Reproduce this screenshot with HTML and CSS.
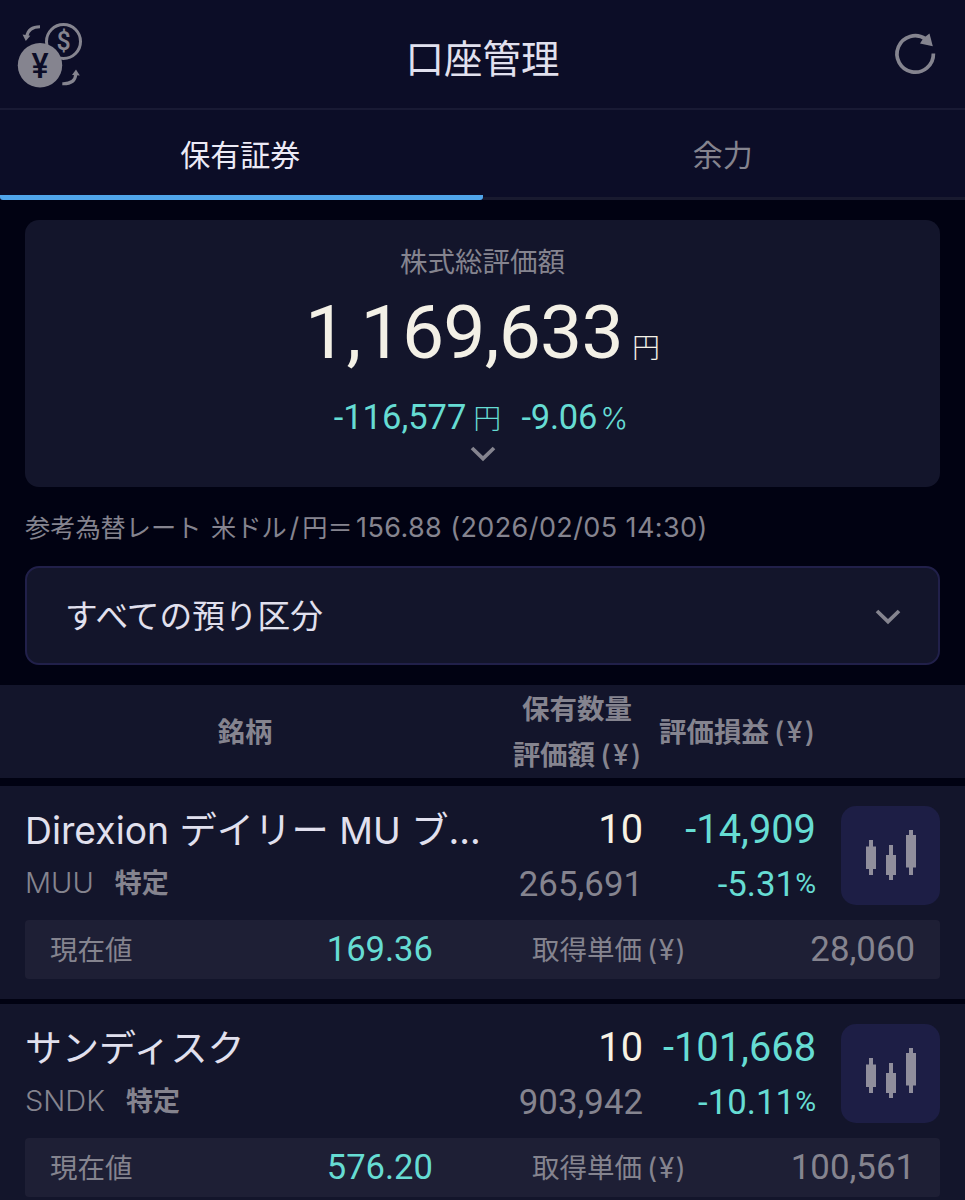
FILE: index.html
```html
<!DOCTYPE html>
<html lang="ja">
<head>
<meta charset="utf-8">
<title>口座管理</title>
<link rel="stylesheet" href="styles.css">
</head>
<body>
<header class="topbar">
  <svg class="icon-currency" viewBox="0 0 70 70" width="70" height="70">
    <circle class="ring" cx="48.5" cy="26.5" r="17"/>
    <circle class="coin" cx="25" cy="50.3" r="22.2"/>
    <text class="yen" transform="translate(25 62.8) scale(.92 1)">¥</text>
    <text class="dollar" x="48.5" y="35.3">$</text>
    <path class="stroke" d="M25 11.7C16.5 11.7 12.8 15 11.700 21.5"/>
    <path class="fill" d="M7.600 19.500L15.300 20.800L10.800 26z"/>
    <path class="stroke" d="M47.300 68.700C56 69 60.200 66 60.800 59.500"/>
    <path class="fill" d="M57 60L61 54.600L64.800 60.500z"/>
  </svg>
  <h1 class="title">口座管理</h1>
  <svg class="icon-refresh" viewBox="0 0 44 44" width="44" height="44">
    <path class="arc" d="M40.400 21.500A18.200 18.200 0 1 1 32.600 7"/>
    <path class="fill" d="M36.500 1.500L39.800 14.300L27 11.500L30.500 6z"/>
  </svg>
</header>
<nav class="tabs">
  <div class="tab tab-active">保有証券</div>
  <div class="tab">余力</div>
</nav>
<main>
  <section class="summary">
    <div class="summary-label">株式総評価額</div>
    <div class="summary-total"><span class="num total">1,169,633</span><span class="yen-unit">円</span></div>
    <div class="summary-change"><span class="num">-116,577</span><span class="unit">円</span><span class="num rate">-9.06</span><span class="pct-unit">%</span></div>
    <svg class="chevron" viewBox="0 0 26 16" width="26" height="16"><path d="M2 2L13 12.600L24 2"/></svg>
  </section>
  <p class="fx"><span class="fx-label">参考為替レート</span><span class="fx-pair">米ドル<i>/</i>円＝</span><span class="fx-rate">156.88 (2026/02/05 14:30)</span></p>
  <div class="select">
    <span class="select-text">すべての預り区分</span>
    <svg class="chevron" viewBox="0 0 26 16" width="26" height="16"><path d="M2 2L13 12.600L24 2"/></svg>
  </div>
  <div class="thead">
    <div class="th th-name">銘柄</div>
    <div class="th th-qty">保有数量<br>評価額<span class="cur">(¥)</span></div>
    <div class="th th-pl">評価損益<span class="cur">(¥)</span></div>
  </div>
  <article class="holding">
    <div class="grid">
      <div class="name name-mixed">Direxion デイリー MU ブ...</div>
      <div class="num qty">10</div>
      <div class="num pl">-14,909</div>
      <div class="chart-btn">
        <svg viewBox="0 0 50 50" width="50" height="50"><path d="M3 10h4v6.500h3v22.500H7v6H3v-6H0V16.500h3zM23 15h4v10h3v20h-3v5h-4v-5h-3V25h3zM43 0h4v5h3v32.500h-3v7.500h-4v-7.500h-3V5h3z"/></svg>
      </div>
      <div class="sub"><span class="ticker">MUU</span><span class="acct">特定</span></div>
      <div class="num value">265,691</div>
      <div class="num plpct">-5.31<span class="pct">%</span></div>
    </div>
    <div class="detail">
      <span class="d-label">現在値</span><span class="num d-price">169.36</span>
      <span class="d-label d-cost-label">取得単価<span class="cur">(¥)</span></span><span class="num d-cost">28,060</span>
    </div>
  </article>
  <article class="holding">
    <div class="grid">
      <div class="name">サンディスク</div>
      <div class="num qty">10</div>
      <div class="num pl">-101,668</div>
      <div class="chart-btn">
        <svg viewBox="0 0 50 50" width="50" height="50"><path d="M3 10h4v6.500h3v22.500H7v6H3v-6H0V16.500h3zM23 15h4v10h3v20h-3v5h-4v-5h-3V25h3zM43 0h4v5h3v32.500h-3v7.500h-4v-7.500h-3V5h3z"/></svg>
      </div>
      <div class="sub"><span class="ticker">SNDK</span><span class="acct">特定</span></div>
      <div class="num value">903,942</div>
      <div class="num plpct">-10.11<span class="pct">%</span></div>
    </div>
    <div class="detail">
      <span class="d-label">現在値</span><span class="num d-price">576.20</span>
      <span class="d-label d-cost-label">取得単価<span class="cur">(¥)</span></span><span class="num d-cost">100,561</span>
    </div>
  </article>
</main>
</body>
</html>
```
FILE: styles.css
```css
* { box-sizing: border-box; }
html, body { height: 1200px; overflow: hidden; }
body {
  margin: 0;
  background: #010212;
  color: #e1e0ee;
  font-family: Inter, "Noto Sans CJK JP", sans-serif;
  font-weight: 400;
}
.num { font-family: Roboto, "Noto Sans CJK JP", sans-serif; white-space: nowrap; }

.topbar {
  height: 110px;
  padding: 0 28px 0 15px;
  display: grid;
  grid-template-columns: 1fr auto 1fr;
  background: #0c0d27;
  border-bottom: 2px solid #191a34;
}
.icon-currency { margin-top: 15px; overflow: visible; }
.icon-refresh { margin-top: 32px; justify-self: end; }
.title { margin: 0 0 0 13px; font-size: 38.5px; font-weight: 400; line-height: 119px; }
.ring, .stroke, .arc { fill: none; stroke: #85848f; stroke-width: 3; }
.arc { stroke-width: 3.7; }
.coin, .fill { fill: #85848f; }
.yen { font: 500 35px Roboto, sans-serif; fill: #0c0d27; text-anchor: middle; }
.dollar { font: 500 25px Roboto, sans-serif; fill: #85848f; text-anchor: middle; }

.tabs { display: flex; height: 90px; background: #0c0d27; }
.tab {
  flex: 1;
  padding-right: 2px;
  text-align: center;
  font-size: 30px;
  line-height: 91px;
  color: #85848f;
  border-bottom: 3px solid #191a2f;
}
.tab-active { color: #eceaf6; border-bottom: 5px solid #50a5ea; border-radius: 0 0 3px 3px; }

.summary {
  margin: 20px 25px 0;
  height: 267px;
  border-radius: 14px;
  background: #13152b;
  display: flex;
  flex-direction: column;
  align-items: center;
}
.summary-label { margin-top: 18px; font-size: 27.500px; line-height: 48px; color: #85848f; }
.summary-total { height: 92px; line-height: 92px; color: #f3f0e6; white-space: nowrap; }
.total { font-size: 75px; letter-spacing: -.75px; }
.yen-unit { margin-left: 9px; font-size: 28px; font-weight: 300; }
.summary-change { height: 54px; margin: 12px 3px 0 0; line-height: 54px; color: #66dcd3; font-size: 34.500px; white-space: nowrap; }
.unit { margin-left: 7px; font-size: 28px; font-weight: 300; }
.rate { margin-left: 20px; letter-spacing: -.2px; }
.pct-unit { margin-left: 3px; font-size: 30px; font-weight: 300; }
.chevron { fill: none; stroke: #85848f; stroke-width: 3.7; }
.summary .chevron { margin-top: 2px; }

.fx { margin: 16px 25px 0; height: 50px; font-size: 25.200px; line-height: 50px; color: #85848f; display: flex; white-space: nowrap; }
.fx-label { width: 186px; }
.fx-pair { width: 145px; }
.fx-pair i { font-style: normal; margin: 0 3px; font-size: 27px; }
.fx-rate { font-size: 27px; letter-spacing: .4px; }

.select {
  margin: 13px 25px 0;
  height: 99px;
  padding: 0 37px 0 38px;
  display: flex;
  align-items: center;
  justify-content: space-between;
  border: 2px solid #21204a;
  border-radius: 14px;
  background: #13152b;
  font-size: 32.700px;
}
.select-text { padding-bottom: 4px; }
.select .chevron { margin-top: 2px; }

.thead {
  margin-top: 20px;
  height: 93px;
  display: flex;
  align-items: center;
  background: #13152b;
  color: #85848f;
  font-size: 27.500px;
  font-weight: 600;
  line-height: 46px;
  text-align: center;
}
.th-name { width: 490px; }
.th-qty { width: 174px; }
.th-pl { width: 146px; display: flex; justify-content: center; white-space: nowrap; }
.cur { margin-left: 5px; letter-spacing: 1.500px; font-size: 28px; }
.th .cur { letter-spacing: 2.500px; margin-right: -2.500px; font-weight: 500; }

.holding { margin-top: 8px; padding: 18px 25px 20px; height: 213px; background: #13152b; }
.holding + .holding { margin-top: 5px; }
.grid {
  display: grid;
  grid-template: 52px 54px / 465px 153px 173px 1fr;
}
.name { font-size: 37px; line-height: 54px; white-space: nowrap; }
.name-mixed { font-size: 37.300px; }
.qty, .pl { font-size: 39.800px; line-height: 52px; text-align: right; }
.qty { color: #f7f2e4; }
.pl, .plpct, .d-price { color: #66dcd3; }
.chart-btn {
  grid-column: 4;
  grid-row: 1 / 3;
  width: 99px;
  height: 99px;
  margin-top: 2px;
  padding-bottom: 2px;
  justify-self: end;
  display: flex;
  align-items: center;
  justify-content: center;
  border-radius: 15px;
  background: #1d1e45;
}
.chart-btn svg { fill: #908e9c; }
.sub { color: #85848f; line-height: 54px; font-size: 29px; }
.ticker { font-weight: 300; }
.acct { margin-left: 21px; font-size: 27px; font-weight: 600; }
.value, .plpct { font-size: 34.800px; line-height: 56px; text-align: right; }
.value { color: #85848f; }
.pct { font-size: 28.500px; position: relative; top: -3px; }
.detail {
  margin-top: 10px;
  height: 59px;
  padding: 0 25px;
  display: grid;
  grid-template-columns: 183px 200px 99px 156px 1fr;
  border-radius: 4px;
  background: #1e1f35;
  line-height: 59px;
  color: #85848f;
}
.d-label { font-size: 27.500px; line-height: 61px; white-space: nowrap; }
.d-price { font-size: 34.600px; text-align: right; }
.d-cost-label { grid-column: 4; }
.d-cost { font-size: 34.800px; text-align: right; }
```
